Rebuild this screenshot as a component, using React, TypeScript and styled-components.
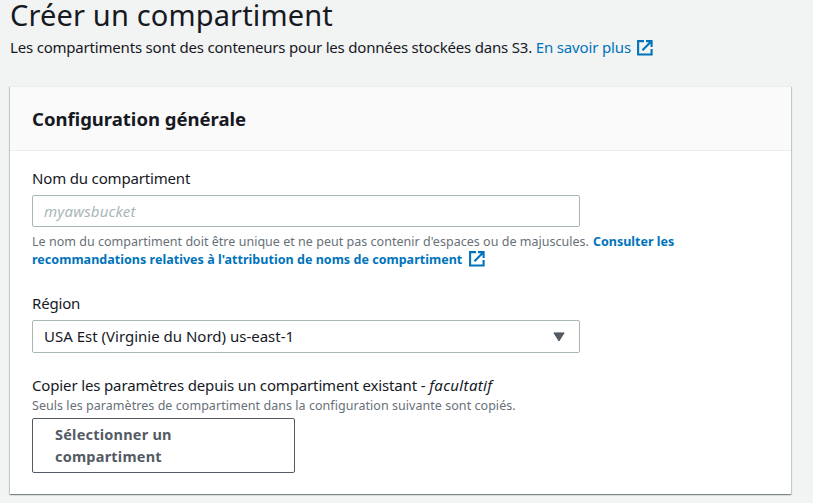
import React from 'react';
import styled, { createGlobalStyle, css } from 'styled-components';

const GlobalStyle = createGlobalStyle`
  * { box-sizing: border-box; }
  body {
    margin: 0;
    background: #f2f3f3;
    color: #16191f;
    font-family: 'Noto Sans', 'Open Sans', sans-serif;
    font-size: 15px;
    line-height: 22px;
    overflow: hidden;
  }
`;

const Page = styled.main`
  height: 503px;
  padding: 0 22px 0 10px;
  white-space: nowrap;
`;

const PageTitle = styled.h1`
  margin: 0;
  height: 36px;
  font-size: 29px;
  line-height: 29px;
  font-weight: 400;
`;

const Intro = styled.p`
  display: flex;
  margin: 0 0 27px;
  height: 23px;
`;

const Text = styled.span<{ $track?: number }>`
  letter-spacing: ${({ $track = 0 }) => $track}px;
`;

const Optional = styled.i`
  letter-spacing: 0.35px;
`;

const Link = styled.a<{ $bold?: boolean; $track?: number }>`
  color: #0073bb;
  text-decoration: none;
  letter-spacing: ${({ $track = 0 }) => $track}px;
  ${({ $bold }) => $bold && css`font-weight: 700;`}
`;

const Panel = styled.section`
  height: 408px;
  background: #fff;
  border-top: 1px solid #eaeded;
  box-shadow: 0 1px 1px 0 rgba(0, 28, 36, 0.3), 1px 1px 1px 0 rgba(0, 28, 36, 0.15),
    -1px 1px 1px 0 rgba(0, 28, 36, 0.15);
`;

const PanelHeader = styled.header`
  display: flex;
  align-items: center;
  height: 64px;
  padding: 0 22px;
  background: #fafafa;
  border-bottom: 1px solid #eaeded;
`;

const PanelTitle = styled.h2`
  margin: 0;
  font-size: 18.5px;
  font-weight: 700;
`;

const PanelBody = styled.div`
  padding: 16px 22px 0;
`;

const Field = styled.div<{ $height: number }>`
  height: ${({ $height }) => $height}px;
`;

const Label = styled.label`
  display: block;
  height: 28px;
  letter-spacing: -0.17px;
`;

const control = css`
  width: 548px;
  border: 1px solid #aab7b8;
  border-radius: 2px;
  background: #fff;
  padding: 0 11px;
`;

const Input = styled.input`
  ${control}
  display: block;
  height: 32px;
  margin-bottom: 6px;
  font: italic 15px 'Noto Sans', sans-serif;
  letter-spacing: 0.17px;
  outline: none;
  &::placeholder { color: #aab7b8; opacity: 1; }
`;

const Select = styled.div`
  ${control}
  display: flex;
  align-items: center;
  justify-content: space-between;
  height: 33px;
  padding: 0 14px 1px 11px;
`;

const Hint = styled.div`
  color: #687078;
  font-size: 12.5px;
  line-height: 18px;
`;

const HintLine = styled.div`
  display: flex;
  gap: 4px;
`;

const CopySection = styled.div`
  ${Hint} {
    margin-top: 1px;
  }
`;

const Button = styled.button`
  display: block;
  width: 263px;
  height: 55px;
  margin-top: 3px;
  padding: 0 22px 2px;
  border: 1px solid #545b64;
  border-radius: 2px;
  background: #fff;
  color: #545b64;
  font: 700 14.5px/22px 'Noto Sans', sans-serif;
  letter-spacing: 0.22px;
  text-align: left;
`;

const IconSvg = styled.svg<{ $gap: number; $top: number }>`
  flex: none;
  width: 16px;
  height: 16px;
  margin: ${({ $top, $gap }) => `${$top}px 0 0 ${$gap}px`};
`;

const CaretSvg = styled.svg`
  width: 12px;
  height: 10px;
  margin-top: 2px;
`;

const ExternalIcon = ({ gap, top }: { gap: number; top: number }) => (
  <IconSvg $gap={gap} $top={top} viewBox="0 0 16 16" fill="none" stroke="#0073bb" strokeWidth="2.1">
    <path d="M7 1.1H1.1v13.4h13.5V9M9 1.1h5.6v5.9M14.4 1.3L5.4 10.2" />
  </IconSvg>
);

const CaretIcon = () => (
  <CaretSvg viewBox="0 0 12 10">
    <path d="M.9.9h10.2L6 9z" fill="#545b64" stroke="#545b64" strokeLinejoin="round" />
  </CaretSvg>
);

export default function App() {
  return (
    <>
      <GlobalStyle />
      <Page>
        <PageTitle><Text $track={0.15}>Créer un compartiment</Text></PageTitle>
        <Intro>
          <Text $track={-0.195}>Les compartiments sont des conteneurs pour les données stockées dans S3.&nbsp;</Text>
          <Link $track={-0.15}>En savoir plus</Link>
          <ExternalIcon gap={6} top={4} />
        </Intro>
        <Panel>
          <PanelHeader><PanelTitle>Configuration générale</PanelTitle></PanelHeader>
          <PanelBody>
            <Field $height={125}>
              <Label htmlFor="bucket">Nom du compartiment</Label>
              <Input id="bucket" placeholder="myawsbucket" />
              <Hint>
                <HintLine>
                  <Text $track={0.025}>Le nom du compartiment doit être unique et ne peut pas contenir d'espaces ou de majuscules.</Text>
                  <Link $bold>Consulter les</Link>
                </HintLine>
                <HintLine>
                  <Link $bold $track={0.03}>recommandations relatives à l'attribution de noms de compartiment</Link>
                  <ExternalIcon gap={3} top={0} />
                </HintLine>
              </Hint>
            </Field>
            <Field $height={82}>
              <Label>Région</Label>
              <Select>
                <Text>USA Est (Virginie du Nord) us-east-1</Text>
                <CaretIcon />
              </Select>
            </Field>
            <CopySection>
              <Text $track={-0.145}>Copier les paramètres depuis un compartiment existant - <Optional>facultatif</Optional></Text>
              <Hint><Text $track={0.045}>Seuls les paramètres de compartiment dans la configuration suivante sont copiés.</Text></Hint>
              <Button>Sélectionner un<br />compartiment</Button>
            </CopySection>
          </PanelBody>
        </Panel>
      </Page>
    </>
  );
}
